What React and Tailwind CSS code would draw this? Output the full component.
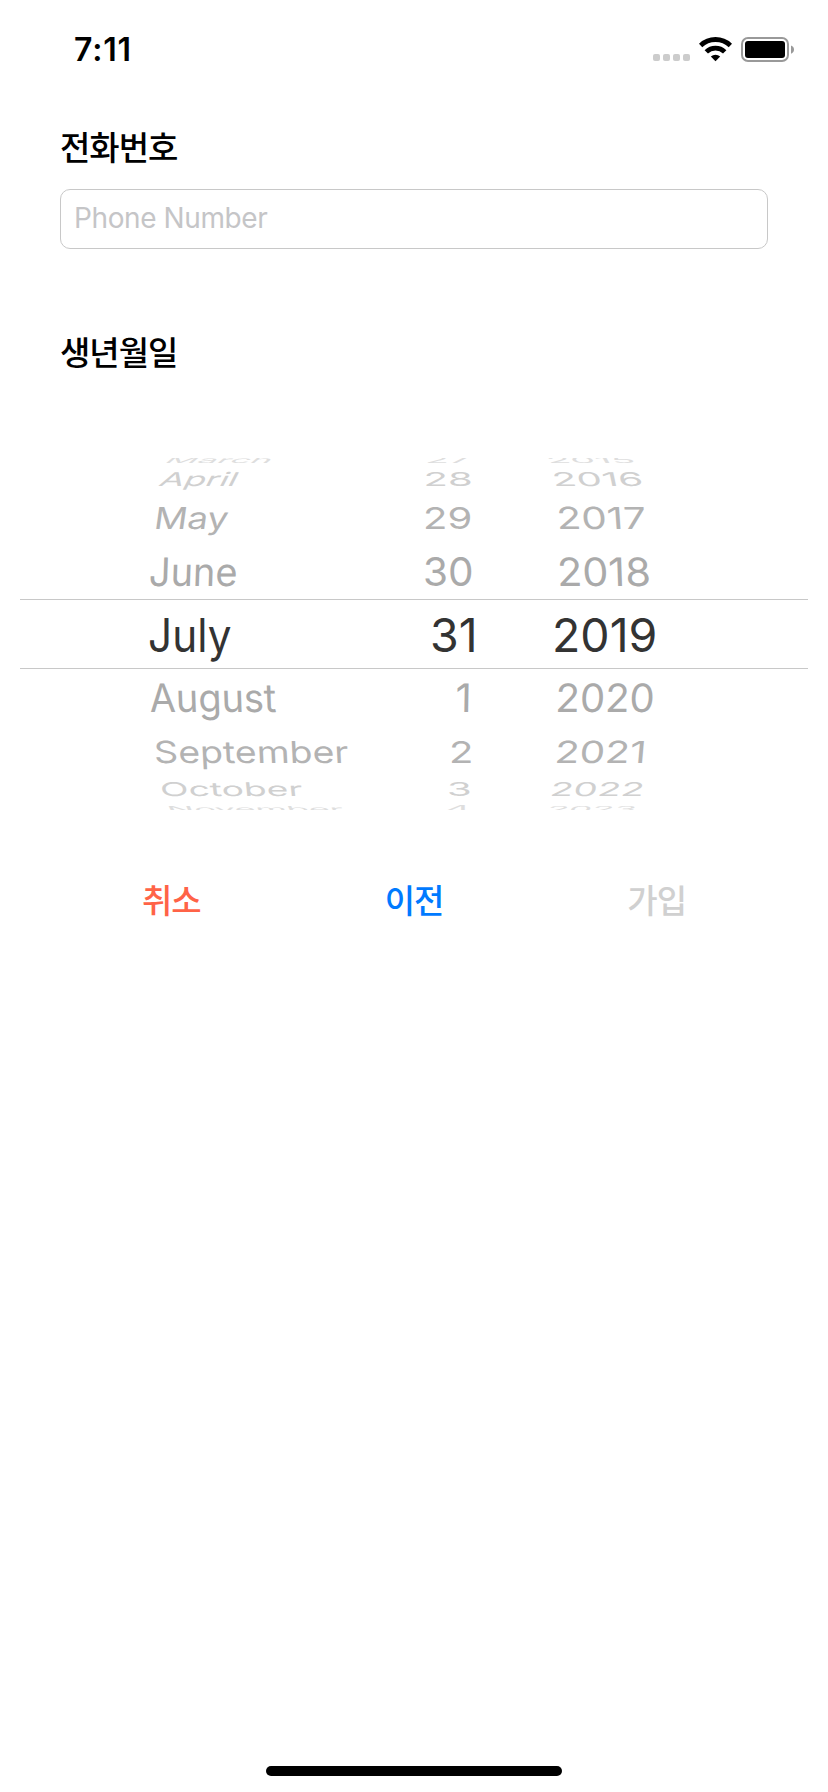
import { useState } from "react"

// Cada celda: [texto, x, ancho, inclinación]
const filas = [
    { alto: 'h-[9px]', color: 'text-[#dedede]', y: -3.3, sy: 0.18, celdas: [['March', 167, 0.77, -50], ['27', 425, 0.85, 0], ['2015', 546.5, 0.85, 30]] },
    { alto: 'h-[24px]', color: 'text-[#d0d0d0]', y: 0, sy: 0.41, celdas: [['April', 161, 0.77, -27], ['28', 423.5, 0.87, 0], ['2016', 552, 0.87, 12]] },
    { alto: 'h-[52px]', color: 'text-[#b3b3b3]', y: 0.5, sy: 0.66, celdas: [['May', 154.5, 0.8, -8], ['29', 423, 0.87, 0], ['2017', 556.5, 0.88, 4]] },
    { alto: 'h-[56px]', color: 'text-[#aaaaaa]', y: 0.8, sy: 0.85, celdas: [['June', 149, 0.825, -2], ['30', 423, 0.88, 0], ['2018', 557, 0.9, 2]] },
    { alto: 'h-[70px] border-y border-[#c8c8c8]', color: 'text-[#333333]', y: 0.5, sy: 1, celdas: [['July', 148, 0.92, 0], ['31', 430, 1.01, 0], ['2019', 552, 1.01, 0]] },
    { alto: 'h-[56px]', color: 'text-[#aaaaaa]', y: 0.8, sy: 0.85, celdas: [['August', 149.5, 0.825, 2], ['1', 455.5, 0.87, -1], ['2020', 555.5, 0.87, -2]] },
    { alto: 'h-[52px]', color: 'text-[#b3b3b3]', y: 0.5, sy: 0.66, celdas: [['September', 154, 0.815, 3], ['2', 449, 0.87, 0], ['2021', 555, 0.88, -5]] },
    { alto: 'h-[24px]', color: 'text-[#d0d0d0]', y: 0, sy: 0.41, celdas: [['October', 160, 0.808, 6], ['3', 447, 0.87, 0], ['2022', 550.5, 0.83, -12]] },
    { alto: 'h-[9px]', color: 'text-[#dedede]', y: 3.3, sy: 0.18, celdas: [['November', 167, 0.78, 25], ['4', 445.5, 0.85, 0], ['2023', 547, 0.79, -30]] },
]

// Inicio de cada columna de la rueda
const columnas = [148, 424, 548]

function Estado() {
    return (
        <header className="flex h-[100px] justify-between pl-[74px] pr-[33px]">
            <p className="mt-[30px] text-[32px] leading-[40px] font-semibold tracking-[0.8px]">7:11</p>
            <div className="mt-[37px] flex h-[25px]">
                <div className="mt-[17px] flex gap-[3px]">
                    <span className="size-[7px] rounded-[2px] bg-[#cccccc]" />
                    <span className="size-[7px] rounded-[2px] bg-[#cccccc]" />
                    <span className="size-[7px] rounded-[2px] bg-[#cccccc]" />
                    <span className="size-[7px] rounded-[2px] bg-[#cccccc]" />
                </div>
                <svg className="ml-[9px] h-[25px] w-[33px]" viewBox="0 0 33 25">
                    <path d="M1.600 8.500a21.500 21.500 0 0 1 29.800 0" fill="none" stroke="#000" strokeWidth="4.8" />
                    <path d="M7.300 14.900a13.200 13.200 0 0 1 18.400 0" fill="none" stroke="#000" strokeWidth="4.8" />
                    <path d="M11.800 19.500a7 7 0 0 1 9.400 0L16.500 24.200z" />
                </svg>
                <svg className="ml-[9px] h-[25px] w-[54px]" viewBox="0 0 54 25">
                    <rect x="1" y="1" width="46" height="23" rx="6" fill="none" stroke="#999" strokeWidth="2" />
                    <rect x="4" y="4" width="40" height="17" rx="3" />
                    <path d="M50 8.500c4 1.200 4 7 0 8.200z" fill="#999" />
                </svg>
            </div>
        </header>
    )
}

function Rueda() {
    return (
        <div className="mx-5 mt-[78px] flex h-[352px] flex-col overflow-hidden">
            {filas.map((fila) => (
                <div key={fila.celdas[0][0]} className={`grid shrink-0 grid-cols-[276px_124px_240px] items-center pl-32 text-[46px] leading-none ${fila.alto} ${fila.color}`}>
                    {fila.celdas.map(([texto, x, sx, inclinacion], i) => (
                        <div key={texto} className="flex h-0 items-center">
                            <span
                                className="origin-left whitespace-nowrap"
                                style={{ transform: `translate(${x - columnas[i]}px, ${fila.y}px) skewX(${inclinacion}deg) scale(${sx}, ${fila.sy})` }}
                            >
                                {texto}
                            </span>
                        </div>
                    ))}
                </div>
            ))}
        </div>
    )
}

export default function App() {
    const [ telefono, setTelefono ] = useState('');

    return (
        <div className="flex h-[1792px] w-[828px] flex-col bg-white font-['Inter','Noto_Sans_CJK_KR',sans-serif] text-black">
            <Estado />
            <main className="flex flex-col">
                <label htmlFor="telefono" className="mt-[26px] ml-[60px] h-[44px] text-[33px] leading-[44px] font-medium tracking-[-1px]">전화번호</label>
                <input value={telefono} onChange={e => setTelefono(e.target.value)} id="telefono" type="text" className="mx-[60px] mt-[19px] h-[60px] rounded-[10px] border border-[#c8c8c8] px-[13px] pb-[2px] text-[28px] tracking-[-0.4px] placeholder:text-[#c5c5c7]" placeholder="Phone Number"/>
                <h2 className="mt-[82px] ml-[60px] h-[49px] text-[33px] leading-[44px] font-medium tracking-[-1px]">생년월일</h2>
                <Rueda />
                <div className="mx-[50px] mt-[69px] grid grid-cols-3 text-[33px] leading-[44px] font-medium tracking-[-1px]">
                    <button type="button" className="text-[#ff6347]">취소</button>
                    <button type="button" className="text-[#007aff]">이전</button>
                    <button type="button" className="text-[#d0d0d0]" disabled>가입</button>
                </div>
            </main>
            <div className="mx-auto mt-auto mb-4 h-[10px] w-[296px] rounded-full bg-black" />
        </div>
    )
}
